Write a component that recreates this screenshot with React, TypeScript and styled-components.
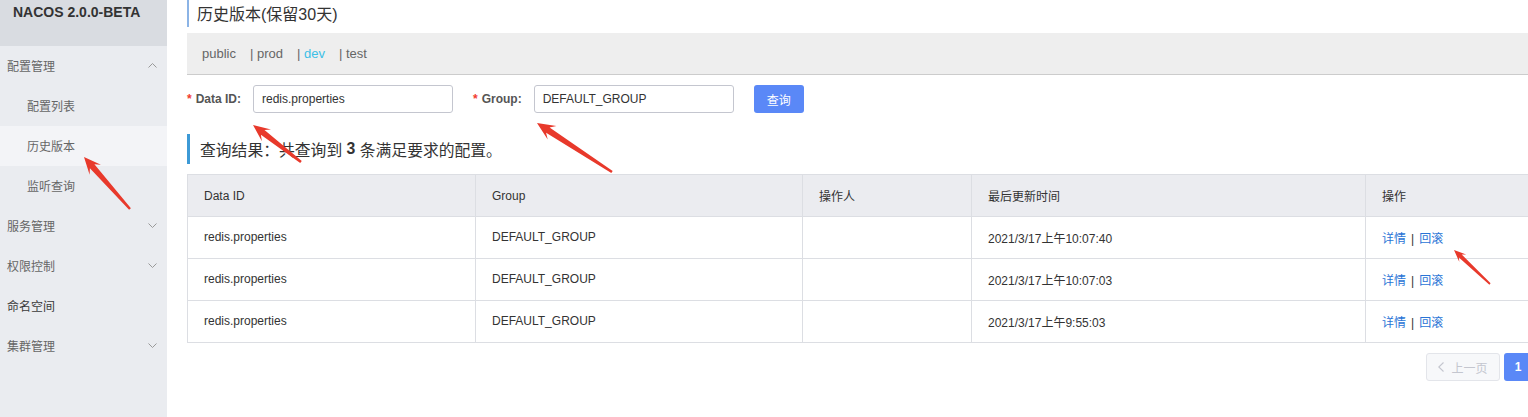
import React from 'react';
import styled, { createGlobalStyle } from 'styled-components';

const GlobalStyle = createGlobalStyle`
  html, body { margin: 0; padding: 0; background: #fff; }
  body {
    font-family: "Liberation Sans", "Noto Sans CJK SC", sans-serif;
    color: #333;
    font-size: 12px;
  }
  * { box-sizing: border-box; }
`;

const Page = styled.div`
  position: relative;
  display: flex;
  width: 1528px;
  height: 417px;
  overflow: hidden;
`;

const Sidebar = styled.aside`
  flex: 0 0 167px;
  display: flex;
  flex-direction: column;
  background: #eaecf0;
`;

const Brand = styled.div`
  height: 46px;
  padding: 4px 0 0 13px;
  background: #d9dce1;
  color: #333;
  font-size: 14px;
  font-weight: bold;
  line-height: 16px;
`;

const MenuItem = styled.div<{ $sub?: boolean; $active?: boolean; $strong?: boolean }>`
  height: 40px;
  display: flex;
  align-items: center;
  justify-content: space-between;
  padding: 0 10px 1px ${(p) => (p.$sub ? 27 : 7)}px;
  background: ${(p) => (p.$active ? '#f3f4f7' : 'transparent')};
  color: ${(p) => (p.$strong ? '#3a3a3a' : '#666')};
  font-size: 12px;
  font-family: "Noto Sans CJK SC", sans-serif;
`;

const Main = styled.main`
  flex: 0 0 auto;
  width: 1365px;
  padding-left: 20px;
  display: flex;
  flex-direction: column;
`;

const PageTitle = styled.div`
  height: 27px;
  display: flex;
  align-items: center;
  padding: 0 0 2px 8px;
  border-left: 2px solid #8cb4e6;
  font-size: 16px;
  color: #333;
`;

const NamespaceBar = styled.div`
  margin-top: 6px;
  height: 42px;
  display: flex;
  align-items: center;
  gap: 14px;
  padding-left: 15px;
  background: #eeeeee;
  border-bottom: 1px solid #cccccc;
`;

const NsItem = styled.span<{ $active?: boolean }>`
  font-size: 13px;
  color: #666;
  white-space: pre;
  & > em {
    font-style: normal;
    color: ${(p) => (p.$active ? '#3cbfe6' : '#666')};
  }
`;

const FormRow = styled.div`
  margin-top: 10px;
  height: 28px;
  display: flex;
  align-items: center;
`;

const FormItem = styled.div`
  display: flex;
  align-items: center;
  margin-right: 20px;
`;

const Label = styled.label`
  margin-right: 12px;
  font-size: 12px;
  font-weight: bold;
  color: #555;
  white-space: pre;
  &::before {
    content: '*';
    color: #f23b30;
    margin-right: 4px;
  }
`;

const Input = styled.input`
  width: 200px;
  height: 28px;
  padding: 0 8px;
  border: 1px solid #c4c6cf;
  border-radius: 3px;
  font-family: "Liberation Sans", sans-serif;
  font-size: 12px;
  color: #333;
  outline: none;
`;

const PrimaryButton = styled.button`
  width: 50px;
  height: 28px;
  border: none;
  border-radius: 3px;
  background: #5a88f7;
  color: #fff;
  font-family: "Noto Sans CJK SC", sans-serif;
  font-size: 12px;
`;

const ResultTitle = styled.div`
  margin-top: 21px;
  height: 30px;
  display: flex;
  align-items: center;
  padding-left: 10px;
  border-left: 3px solid #3d9ad6;
  font-size: 15.8px;
  color: #333;
  white-space: pre;
  & > strong { font-weight: bold; }
`;

const Table = styled.table`
  margin-top: 10px;
  width: 1345px;
  border-collapse: collapse;
  table-layout: fixed;
  border: 1px solid #dcdee3;
`;

const Th = styled.th`
  height: 42px;
  padding: 0 16px;
  background: #ebecf0;
  border: 1px solid #dcdee3;
  text-align: left;
  font-weight: normal;
  font-size: 12px;
  color: #333;
`;

const Td = styled.td`
  height: 42px;
  padding: 0 16px 1px;
  border: 1px solid #dcdee3;
  font-size: 12px;
  color: #333;
  white-space: nowrap;
`;

const Link = styled.a`
  color: #2a74d6;
  text-decoration: none;
`;

const Sep = styled.span`
  color: #333;
  margin: 0 5px;
`;

const Pager = styled.div`
  margin-top: 10px;
  display: flex;
  justify-content: flex-end;
  gap: 4px;
`;

const PrevButton = styled.button`
  width: 74px;
  height: 28px;
  display: flex;
  align-items: center;
  justify-content: center;
  gap: 7px;
  border: 1px solid #e3e5ea;
  border-radius: 3px;
  background: #f7f8fa;
  color: #c4c6cf;
  font-family: "Noto Sans CJK SC", sans-serif;
  font-size: 12px;
  padding: 0;
`;

const PageButton = styled.button`
  width: 28px;
  height: 28px;
  border: none;
  border-radius: 3px;
  background: #5a88f7;
  color: #fff;
  font-family: "Liberation Sans", sans-serif;
  font-weight: bold;
  font-size: 12px;
  padding: 0;
`;

const Overlay = styled.svg`
  position: absolute;
  left: 0;
  top: 0;
  pointer-events: none;
`;

const Chevron = ({ up }: { up?: boolean }) => (
  <svg width="9" height="5" viewBox="0 0 9 5">
    <polyline
      points={up ? '0.5,4.5 4.5,0.5 8.5,4.5' : '0.5,0.5 4.5,4.5 8.5,0.5'}
      fill="none"
      stroke="#999"
      strokeWidth="1"
    />
  </svg>
);

const PrevIcon = () => (
  <svg width="6" height="10" viewBox="0 0 6 10">
    <polyline points="5.5,0.5 0.8,5 5.5,9.5" fill="none" stroke="#c4c6cf" strokeWidth="1.1" />
  </svg>
);

function arrowPoints(
  tx: number, ty: number, hx: number, hy: number,
  headLen: number, headW: number, tailW: number, neckW: number
) {
  const dx = hx - tx;
  const dy = hy - ty;
  const L = Math.hypot(dx, dy);
  const ux = dx / L;
  const uy = dy / L;
  const nx = -uy;
  const ny = ux;
  const bx = hx - ux * headLen;
  const by = hy - uy * headLen;
  const jx = hx - ux * headLen * 0.72;
  const jy = hy - uy * headLen * 0.72;
  const pts = [
    [hx, hy],
    [bx + (nx * headW) / 2, by + (ny * headW) / 2],
    [jx + (nx * neckW) / 2, jy + (ny * neckW) / 2],
    [tx + (nx * tailW) / 2, ty + (ny * tailW) / 2],
    [tx - (nx * tailW) / 2, ty - (ny * tailW) / 2],
    [jx - (nx * neckW) / 2, jy - (ny * neckW) / 2],
    [bx - (nx * headW) / 2, by - (ny * headW) / 2],
  ];
  return pts.map((p) => `${p[0].toFixed(1)},${p[1].toFixed(1)}`).join(' ');
}

const arrows = [
  { t: [130, 209], h: [84, 157], hl: 17, hw: 15, tw: 2.5, nw: 6 },
  { t: [301, 162], h: [253, 125], hl: 17, hw: 15, tw: 2.5, nw: 6 },
  { t: [612, 172], h: [537, 123], hl: 18, hw: 16, tw: 2.5, nw: 6.5 },
  { t: [1490, 284], h: [1454, 250], hl: 12, hw: 10, tw: 1.8, nw: 4 },
];

const rows = [
  { id: 'redis.properties', group: 'DEFAULT_GROUP', time: '2021/3/17上午10:07:40' },
  { id: 'redis.properties', group: 'DEFAULT_GROUP', time: '2021/3/17上午10:07:03' },
  { id: 'redis.properties', group: 'DEFAULT_GROUP', time: '2021/3/17上午9:55:03' },
];

export default function App() {
  return (
    <>
      <GlobalStyle />
      <Page>
        <Sidebar>
          <Brand>NACOS 2.0.0-BETA</Brand>
          <MenuItem>配置管理<Chevron up /></MenuItem>
          <MenuItem $sub>配置列表</MenuItem>
          <MenuItem $sub $active>历史版本</MenuItem>
          <MenuItem $sub>监听查询</MenuItem>
          <MenuItem>服务管理<Chevron /></MenuItem>
          <MenuItem>权限控制<Chevron /></MenuItem>
          <MenuItem $strong>命名空间</MenuItem>
          <MenuItem>集群管理<Chevron /></MenuItem>
        </Sidebar>
        <Main>
          <PageTitle>历史版本(保留30天)</PageTitle>
          <NamespaceBar>
            <NsItem><em>public</em></NsItem>
            <NsItem>| <em>prod</em></NsItem>
            <NsItem $active>| <em>dev</em></NsItem>
            <NsItem>| <em>test</em></NsItem>
          </NamespaceBar>
          <FormRow>
            <FormItem>
              <Label>Data ID:</Label>
              <Input defaultValue="redis.properties" />
            </FormItem>
            <FormItem>
              <Label>Group:</Label>
              <Input defaultValue="DEFAULT_GROUP" />
            </FormItem>
            <PrimaryButton>查询</PrimaryButton>
          </FormRow>
          <ResultTitle>
            查询结果：共查询到 <strong>3</strong> 条满足要求的配置。
          </ResultTitle>
          <Table>
            <colgroup>
              <col style={{ width: 288 }} />
              <col style={{ width: 327 }} />
              <col style={{ width: 169 }} />
              <col style={{ width: 394 }} />
              <col style={{ width: 167 }} />
            </colgroup>
            <thead>
              <tr>
                <Th>Data ID</Th>
                <Th>Group</Th>
                <Th>操作人</Th>
                <Th>最后更新时间</Th>
                <Th>操作</Th>
              </tr>
            </thead>
            <tbody>
              {rows.map((r, i) => (
                <tr key={i}>
                  <Td>{r.id}</Td>
                  <Td>{r.group}</Td>
                  <Td></Td>
                  <Td>{r.time}</Td>
                  <Td>
                    <Link>详情</Link>
                    <Sep>|</Sep>
                    <Link>回滚</Link>
                  </Td>
                </tr>
              ))}
            </tbody>
          </Table>
          <Pager>
            <PrevButton><PrevIcon />上一页</PrevButton>
            <PageButton>1</PageButton>
          </Pager>
        </Main>
        <Overlay width="1528" height="417" viewBox="0 0 1528 417">
          {arrows.map((a, i) => (
            <polygon
              key={i}
              points={arrowPoints(a.t[0], a.t[1], a.h[0], a.h[1], a.hl, a.hw, a.tw, a.nw)}
              fill="#e8392b"
              strokeLinejoin="round"
            />
          ))}
        </Overlay>
      </Page>
    </>
  );
}
